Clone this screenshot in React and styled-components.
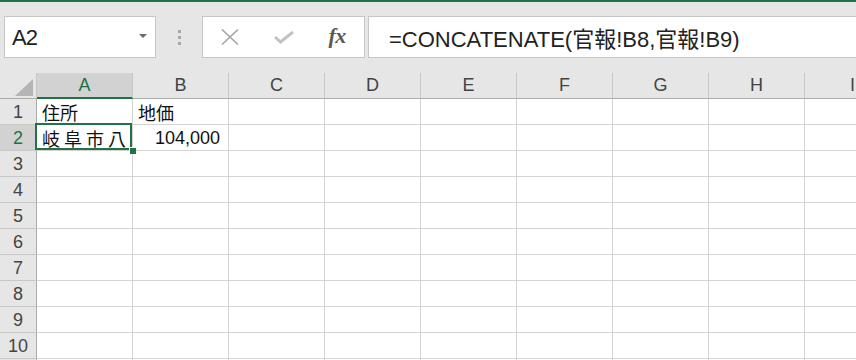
import styled, { createGlobalStyle } from "styled-components";

const GlobalStyle = createGlobalStyle`
  html, body {
    margin: 0;
    padding: 0;
    background: #e6e6e6;
  }
  body {
    font-family: "Liberation Sans", "Noto Sans CJK JP", sans-serif;
  }
`;

const Window = styled.div`
  width: 856px;
  height: 360px;
  overflow: hidden;
  display: flex;
  flex-direction: column;
  background: #e6e6e6;
  border-top: 2px solid #217346;
  box-sizing: border-box;
`;

const Toolbar = styled.div`
  height: 71px;
  flex: none;
  display: flex;
  align-items: flex-start;
  padding: 14px 0 0 4px;
  box-sizing: border-box;
`;

const NameBox = styled.div`
  width: 152px;
  height: 42px;
  box-sizing: border-box;
  background: #fff;
  border: 1px solid #c6c6c6;
  display: flex;
  align-items: center;
  padding: 2px 0 0 7px;
  font-size: 22px;
  letter-spacing: -1px;
  color: #222;
`;

const Caret = styled.span`
  margin-left: auto;
  margin-right: 8px;
  margin-top: -4px;
  width: 0;
  height: 0;
  border-left: 4px solid transparent;
  border-right: 4px solid transparent;
  border-top: 4px solid #6a6a6a;
`;

const Grip = styled.div`
  width: 46px;
  height: 42px;
  display: flex;
  flex-direction: column;
  align-items: center;
  justify-content: center;
  gap: 3px;
`;

const GripDot = styled.span`
  width: 3px;
  height: 3px;
  background: #a8a8a8;
`;

const ActionBox = styled.div`
  width: 163px;
  height: 42px;
  box-sizing: border-box;
  background: #fff;
  border: 1px solid #c6c6c6;
  display: flex;
  align-items: center;
`;

const ActionButton = styled.span`
  flex: 1;
  display: flex;
  align-items: center;
  justify-content: center;
  height: 100%;
`;

const Fx = styled.span`
  font-family: "Liberation Serif", "DejaVu Serif", serif;
  font-style: italic;
  font-weight: bold;
  font-size: 22px;
  color: #5a5a5a;
  letter-spacing: -0.5px;
  margin-top: -2px;
`;

const FormulaInput = styled.div`
  flex: 1;
  height: 42px;
  margin-left: 3px;
  box-sizing: border-box;
  background: #fff;
  border: 1px solid #c6c6c6;
  border-right: none;
  display: flex;
  align-items: center;
  padding: 0 0 1px 20px;
  font-size: 22px;
  letter-spacing: 0;
  color: #222;
  white-space: nowrap;
`;

const Sheet = styled.div`
  display: grid;
  grid-template-columns: 37px repeat(9, 96px);
  grid-auto-rows: 26px;
  background: #fff;
`;

const Corner = styled.div`
  background: #e6e6e6;
  border-right: 1px solid #c6c6c6;
  border-bottom: 1px solid #ababab;
  box-sizing: border-box;
  display: flex;
  align-items: flex-end;
  justify-content: flex-end;
  padding: 0 3px 2px 0;
`;

const ColHeader = styled.div`
  box-sizing: border-box;
  background: ${(p) => (p.$selected ? "#d2d2d2" : "#e6e6e6")};
  border-right: 1px solid #c6c6c6;
  border-bottom: ${(p) => (p.$selected ? "2px solid #217346" : "1px solid #ababab")};
  color: ${(p) => (p.$selected ? "#217346" : "#444")};
  font-size: 18px;
  display: flex;
  align-items: center;
  justify-content: center;
  padding-top: ${(p) => (p.$selected ? "1px" : "0")};
`;

const RowHeader = styled.div`
  box-sizing: border-box;
  background: ${(p) => (p.$selected ? "#d2d2d2" : "#e6e6e6")};
  border-right: 1px solid #ababab;
  border-bottom: 1px solid #c8c8c8;
  color: ${(p) => (p.$selected ? "#217346" : "#444")};
  font-size: 18px;
  display: flex;
  align-items: center;
  justify-content: center;
  padding-top: 1px;
`;

const Cell = styled.div`
  box-sizing: border-box;
  border-right: 1px solid #d4d4d4;
  border-bottom: 1px solid #d4d4d4;
  position: relative;
  display: flex;
  align-items: center;
  min-width: 0;
  z-index: ${(p) => (p.$active ? 2 : 0)};

  ${(p) =>
    p.$active &&
    `
    &::after {
      content: "";
      position: absolute;
      left: -2px;
      top: -2px;
      right: 0;
      bottom: 0;
      border: 2px solid #217346;
    }
  `}
`;

const CellText = styled.span`
  display: block;
  width: 100%;
  overflow: hidden;
  white-space: nowrap;
  font-size: 18px;
  color: #111;
  padding: ${(p) => (p.$align === "right" ? "1px 8px 0 0" : "1px 0 0 5px")};
  text-align: ${(p) => (p.$align === "right" ? "right" : "left")};
  letter-spacing: ${(p) => p.$spacing || "0"};
  box-sizing: border-box;
`;

const FillHandle = styled.span`
  position: absolute;
  right: -4px;
  bottom: -4px;
  width: 6px;
  height: 6px;
  background: #217346;
  border-left: 1px solid #fff;
  border-top: 1px solid #fff;
  z-index: 3;
`;

const columns = ["A", "B", "C", "D", "E", "F", "G", "H", "I"];

const cells = {
  A1: { text: "住所" },
  B1: { text: "地価" },
  A2: { text: "岐阜市八幡町", spacing: "4px" },
  B2: { text: "104,000", align: "right" },
};

const active = { col: "A", row: 2 };

const CrossIcon = () => (
  <svg width="18" height="16" viewBox="0 0 18 16">
    <path d="M1 0.5 L17 15.5 M17 0.5 L1 15.5" stroke="#a6a6a6" strokeWidth="1.6" fill="none" />
  </svg>
);

const CheckIcon = () => (
  <svg width="20" height="13" viewBox="0 0 20 13">
    <path d="M1 6 L6.5 11 L19 1" stroke="#c2c2c2" strokeWidth="3" fill="none" />
  </svg>
);

const CornerTriangle = () => (
  <svg width="18" height="17" viewBox="0 0 18 17">
    <polygon points="18,0 18,17 0,17" fill="#b5b5b5" />
  </svg>
);

const App = () => {
  const rows = Array.from({ length: 11 }, (_, i) => i + 1);
  return (
    <>
      <GlobalStyle />
      <Window>
        <Toolbar>
          <NameBox>
            A2
            <Caret />
          </NameBox>
          <Grip>
            <GripDot />
            <GripDot />
            <GripDot />
          </Grip>
          <ActionBox>
            <ActionButton>
              <CrossIcon />
            </ActionButton>
            <ActionButton>
              <CheckIcon />
            </ActionButton>
            <ActionButton>
              <Fx>fx</Fx>
            </ActionButton>
          </ActionBox>
          <FormulaInput>=CONCATENATE(官報!B8,官報!B9)</FormulaInput>
        </Toolbar>
        <Sheet>
          <Corner>
            <CornerTriangle />
          </Corner>
          {columns.map((c) => (
            <ColHeader key={c} $selected={c === active.col}>
              {c}
            </ColHeader>
          ))}
          {rows.map((r) => [
            <RowHeader key={`h${r}`} $selected={r === active.row}>
              {r}
            </RowHeader>,
            ...columns.map((c) => {
              const data = cells[`${c}${r}`];
              const isActive = c === active.col && r === active.row;
              return (
                <Cell key={`${c}${r}`} $active={isActive}>
                  {data && (
                    <CellText $align={data.align} $spacing={data.spacing}>
                      {data.text}
                    </CellText>
                  )}
                  {isActive && <FillHandle />}
                </Cell>
              );
            }),
          ])}
        </Sheet>
      </Window>
    </>
  );
};

export default App;
